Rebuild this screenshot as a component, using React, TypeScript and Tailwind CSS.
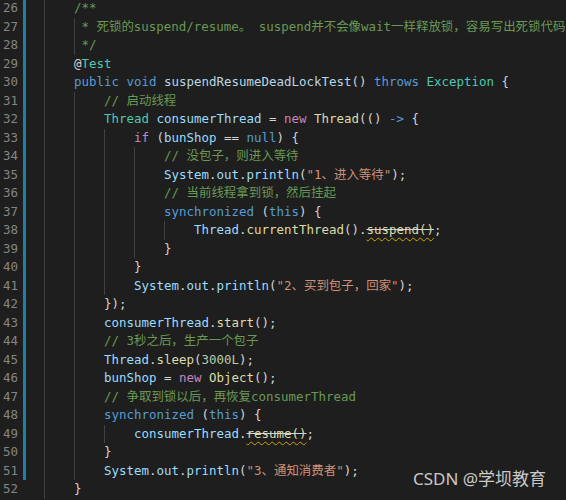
import React from "react"

type Tok = [string, string?] | { dep: string }

const c = {
  kw: "text-[#569cd6]",
  ctrl: "text-[#c586c0]",
  type: "text-[#4ec9b0]",
  fn: "text-[#dcdcaa]",
  v: "text-[#9cdcfe]",
  decl: "text-[#b9d7e6]",
  str: "text-[#ce9178]",
  num: "text-[#b5cea8]",
  cmt: "text-[#6a9955]",
  p: "text-[#d4d4d4]"
}

const lines: { n: number; indent: number; guideText?: boolean; toks: Tok[] }[] = [
  { n: 26, indent: 1, toks: [["/**", c.cmt]] },
  {
    n: 27,
    indent: 1,
    guideText: true,
    toks: [[" * 死锁的suspend/resume。 suspend并不会像wait一样释放锁，容易写出死锁代码", c.cmt]]
  },
  { n: 28, indent: 1, guideText: true, toks: [[" */", c.cmt]] },
  { n: 29, indent: 1, toks: [["@", c.p], ["Test", c.type]] },
  {
    n: 30,
    indent: 1,
    toks: [
      ["public", c.kw],
      [" "],
      ["void", c.kw],
      [" "],
      ["suspendResumeDeadLockTest", c.decl],
      ["() ", c.p],
      ["throws", c.kw],
      [" "],
      ["Exception", c.type],
      [" {", c.p]
    ]
  },
  { n: 31, indent: 2, toks: [["// 启动线程", c.cmt]] },
  {
    n: 32,
    indent: 2,
    toks: [
      ["Thread", c.type],
      [" "],
      ["consumerThread", c.v],
      [" = ", c.p],
      ["new", c.ctrl],
      [" "],
      ["Thread", c.fn],
      ["(() ", c.p],
      ["->", c.kw],
      [" {", c.p]
    ]
  },
  {
    n: 33,
    indent: 3,
    toks: [["if", c.ctrl], [" (", c.p], ["bunShop", c.v], [" == ", c.p], ["null", c.kw], [") {", c.p]]
  },
  { n: 34, indent: 4, toks: [["// 没包子，则进入等待", c.cmt]] },
  {
    n: 35,
    indent: 4,
    toks: [
      ["System", c.v],
      [".", c.p],
      ["out", c.v],
      [".", c.p],
      ["println", c.v],
      ["(", c.p],
      ['"1、进入等待"', c.str],
      [");", c.p]
    ]
  },
  { n: 36, indent: 4, toks: [["// 当前线程拿到锁，然后挂起", c.cmt]] },
  { n: 37, indent: 4, toks: [["synchronized", c.kw], [" (", c.p], ["this", c.kw], [") {", c.p]] },
  {
    n: 38,
    indent: 5,
    toks: [["Thread", c.v], [".", c.p], ["currentThread", c.fn], ["().", c.p], { dep: "suspend()" }, [";", c.p]]
  },
  { n: 39, indent: 4, toks: [["}", c.p]] },
  { n: 40, indent: 3, toks: [["}", c.p]] },
  {
    n: 41,
    indent: 3,
    toks: [
      ["System", c.v],
      [".", c.p],
      ["out", c.v],
      [".", c.p],
      ["println", c.v],
      ["(", c.p],
      ['"2、买到包子，回家"', c.str],
      [");", c.p]
    ]
  },
  { n: 42, indent: 2, toks: [["});", c.p]] },
  { n: 43, indent: 2, toks: [["consumerThread", c.v], [".", c.p], ["start", c.fn], ["();", c.p]] },
  { n: 44, indent: 2, toks: [["// 3秒之后，生产一个包子", c.cmt]] },
  {
    n: 45,
    indent: 2,
    toks: [["Thread", c.v], [".", c.p], ["sleep", c.fn], ["(", c.p], ["3000L", c.num], [");", c.p]]
  },
  {
    n: 46,
    indent: 2,
    toks: [["bunShop", c.v], [" = ", c.p], ["new", c.ctrl], [" "], ["Object", c.fn], ["();", c.p]]
  },
  { n: 47, indent: 2, toks: [["// 争取到锁以后，再恢复consumerThread", c.cmt]] },
  { n: 48, indent: 2, toks: [["synchronized", c.kw], [" (", c.p], ["this", c.kw], [") {", c.p]] },
  { n: 49, indent: 3, toks: [["consumerThread", c.v], [".", c.p], { dep: "resume()" }, [";", c.p]] },
  { n: 50, indent: 2, toks: [["}", c.p]] },
  {
    n: 51,
    indent: 2,
    toks: [
      ["System", c.v],
      [".", c.p],
      ["out", c.v],
      [".", c.p],
      ["println", c.v],
      ["(", c.p],
      ['"3、通知消费者"', c.str],
      [");", c.p]
    ]
  },
  { n: 52, indent: 1, toks: [["}", c.p]] }
]

const Token = ({ t }: { t: Tok }) => {
  if (Array.isArray(t)) return <span className={t[1] ?? c.p}>{t[0]}</span>
  return (
    <span className="underline decoration-wavy decoration-[#cca700] decoration-1 underline-offset-[3px]">
      <span className="line-through decoration-[#d4d4d4] text-[#dcdcaa]">{t.dep}</span>
    </span>
  )
}

export default function App() {
  return (
    <div className="relative w-[566px] h-[500px] overflow-hidden bg-[#1e1e1e] font-['DejaVu_Sans_Mono','Noto_Sans_CJK_SC',monospace] text-[12.46px]">
      <div className="-mt-px">
        {lines.map((line) => (
          <div key={line.n} className="flex h-[18.5px] leading-[18.5px]">
            <div className="w-[18px] text-right text-[#858585]">{line.n}</div>
            <div className={`ml-[5px] w-[3px] ${line.n < 52 ? "bg-[#1b81a8]" : ""}`} />
            <div className="w-[18px]" />
            {Array.from({ length: line.indent }).map((_, i) => (
              <div key={i} className="w-[30px] shrink-0 shadow-[inset_1px_0_0_#404040]" />
            ))}
            <div className={`whitespace-pre ${line.guideText ? "shadow-[inset_1px_0_0_#404040]" : ""}`}>
              {line.toks.map((t, i) => (
                <Token key={i} t={t} />
              ))}
            </div>
          </div>
        ))}
      </div>
      <div className="absolute left-[413px] top-[467px] font-['Noto_Sans','Noto_Sans_CJK_SC',sans-serif] text-[17px] leading-[24px] text-[#c9c9c9]">
        CSDN @学坝教育
      </div>
    </div>
  )
}
